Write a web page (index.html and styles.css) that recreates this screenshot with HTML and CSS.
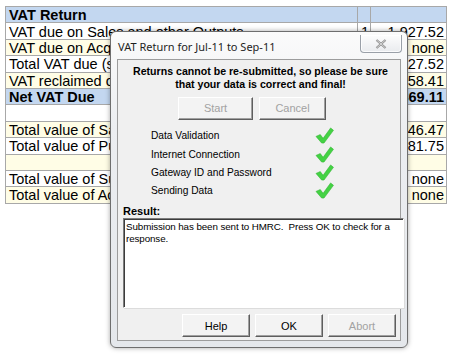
FILE: index.html
```html
<!DOCTYPE html>
<html>
<head>
<meta charset="utf-8">
<link rel="stylesheet" href="styles.css">
</head>
<body>
<div class="page">
  <table class="sheet">
    <colgroup><col class="c-label"><col class="c-box"><col class="c-val"></colgroup>
    <tr class="hdr"><td class="b">VAT Return</td><td></td><td></td></tr>
    <tr class="w"><td>VAT due on Sales and other Outputs</td><td class="n">1</td><td class="n">1,927.52</td></tr>
    <tr class="y"><td>VAT due on Acquisitions from other EC Member States</td><td class="n">2</td><td class="n">none</td></tr>
    <tr class="w"><td>Total VAT due (sum of boxes 1 and 2)</td><td class="n">3</td><td class="n">1,927.52</td></tr>
    <tr class="y"><td>VAT reclaimed on Purchases and other Inputs</td><td class="n">4</td><td class="n">58.41</td></tr>
    <tr class="hdr"><td class="b">Net VAT Due</td><td class="n b">5</td><td class="n b">1,869.11</td></tr>
    <tr class="w"><td></td><td></td><td></td></tr>
    <tr class="y"><td>Total value of Sales and all other Outputs</td><td class="n">6</td><td class="n">9,646.47</td></tr>
    <tr class="w"><td>Total value of Purchases and all other Inputs</td><td class="n">7</td><td class="n">1,281.75</td></tr>
    <tr class="y"><td></td><td></td><td></td></tr>
    <tr class="w"><td>Total value of Supplies of goods to other EC States</td><td class="n">8</td><td class="n">none</td></tr>
    <tr class="y"><td>Total value of Acquisitions of goods from EC States</td><td class="n">9</td><td class="n">none</td></tr>
  </table>

  <div class="dialog">
    <div class="titlebar">
      <span class="title">VAT Return for Jul-11 to Sep-11</span>
      <div class="close">
        <svg width="12" height="10" viewBox="0 0 12 10"><path d="M1.5 1 L10.5 9 M10.5 1 L1.5 9" stroke="#8a8a8a" stroke-width="2.2" fill="none"/><path d="M1.5 1 L10.5 9 M10.5 1 L1.5 9" stroke="#e6e6e6" stroke-width="0.8" fill="none"/></svg>
      </div>
    </div>
    <div class="client">
      <p class="warn">Returns cannot be re-submitted, so please be sure<br>that your data is correct and final!</p>
      <div class="toprow">
        <button class="btn dis start">Start</button>
        <button class="btn dis cancel">Cancel</button>
      </div>
      <ul class="checks">
        <li><span>Data Validation</span><svg class="tick" viewBox="0 0 20 18"><path d="M1 10 L5.5 8 L8.5 12 L16.5 1 L19.5 3.5 L9.5 17 L7 17 Z"/></svg></li>
        <li><span>Internet Connection</span><svg class="tick" viewBox="0 0 20 18"><path d="M1 10 L5.5 8 L8.5 12 L16.5 1 L19.5 3.5 L9.5 17 L7 17 Z"/></svg></li>
        <li><span>Gateway ID and Password</span><svg class="tick" viewBox="0 0 20 18"><path d="M1 10 L5.5 8 L8.5 12 L16.5 1 L19.5 3.5 L9.5 17 L7 17 Z"/></svg></li>
        <li><span>Sending Data</span><svg class="tick" viewBox="0 0 20 18"><path d="M1 10 L5.5 8 L8.5 12 L16.5 1 L19.5 3.5 L9.5 17 L7 17 Z"/></svg></li>
      </ul>
      <div class="result-label">Result:</div>
      <div class="result">Submission has been sent to HMRC.&nbsp; Press OK to check for a response.</div>
      <div class="botrow">
        <button class="btn">Help</button>
        <button class="btn">OK</button>
        <button class="btn dis">Abort</button>
      </div>
    </div>
  </div>
</div>
</body>
</html>
```

FILE: styles.css
```css
* { box-sizing: border-box; }
html, body { margin: 0; padding: 0; background: #fff; }
.page {
  position: relative;
  width: 450px;
  height: 354px;
  overflow: hidden;
  padding: 6px 0 0 5px;
}
.sheet {
  border-collapse: collapse;
  table-layout: fixed;
  width: 441px;
  font-family: "Liberation Sans", Arial, sans-serif;
  font-size: 14.5px;
  color: #000;
}
.c-label { width: 352px; }
.c-box { width: 13px; }
.c-val { width: 76px; }
.sheet td {
  border: 1px solid #a8a8a8;
  height: 16.4px;
  padding: 1px 2px 0 3px;
  line-height: 14px;
  white-space: nowrap;
  overflow: hidden;
}
.sheet td.n { text-align: right; }
.sheet td.b { font-weight: bold; }
.sheet tr.hdr td { background: #c3d7f0; }
.sheet tr.w td { background: #ffffff; }
.sheet tr.y td { background: #fffde6; }

/* dialog */
.dialog {
  position: absolute;
  left: 110px;
  top: 31px;
  width: 298px;
  height: 317px;
  border: 1px solid #6e6e6e;
  border-radius: 6px;
  background: linear-gradient(#fbfbfb, #eceef1 30%, #e4e7eb);
  box-shadow: 0 0 5px rgba(0,0,0,0.35);
  display: flex;
  flex-direction: column;
  padding: 0 6px 6px 6px;
  font-family: "Liberation Sans", Arial, sans-serif;
}
.titlebar {
  position: relative;
  height: 30px;
  display: flex;
  align-items: center;
  padding-left: 1px;
}
.title {
  font-family: "Noto Sans", "Open Sans", sans-serif;
  font-size: 11px;
  color: #1e1e1e;
  margin-top: 2px;
}
.close {
  position: absolute;
  right: -1px;
  top: 3px;
  width: 42px;
  height: 18px;
  border: 1px solid #9aa0a8;
  border-top: none;
  border-radius: 0 0 4px 4px;
  background: linear-gradient(#fdfdfd, #e9ebee);
  box-shadow: inset 0 0 0 1px rgba(255,255,255,0.8);
  display: flex;
  align-items: center;
  justify-content: center;
}
.client {
  flex: 1;
  background: #f0f0f0;
  border: 1px solid #9c9c9c;
  display: flex;
  flex-direction: column;
  padding: 0 0 3px 5px;
}
.warn {
  margin: 5px 0 0 0;
  text-align: center;
  font-weight: bold;
  font-size: 10.6px;
  line-height: 13px;
  color: #000;
  padding-right: 2px;
}
.toprow {
  display: flex;
  gap: 6px;
  margin: 6px 0 0 55px;
}
.btn {
  width: 68px;
  height: 23px;
  margin: 0;
  padding: 0;
  background: #f3f3f3;
  border: 1px solid;
  border-color: #ffffff #5e5e5e #5e5e5e #ffffff;
  box-shadow: inset -1px -1px 0 #a0a0a0;
  font-family: "Liberation Sans", Arial, sans-serif;
  font-size: 11px;
  color: #000;
}
.btn.dis { color: #a2a2a2; }
.toprow .start { width: 75px; }
.toprow .cancel { width: 67px; }
.checks {
  list-style: none;
  margin: 7px 0 0 28px;
  padding: 0;
  width: 183px;
}
.checks li {
  display: flex;
  align-items: center;
  justify-content: space-between;
  height: 18.3px;
  font-size: 10.2px;
  color: #000;
}
.tick {
  width: 19px;
  height: 17px;
  fill: #44d244;
  stroke: #2fb52f;
  stroke-width: 0.6;
}
.result-label {
  margin: 5px 0 0 0;
  font-weight: bold;
  font-size: 11px;
  line-height: 12px;
}
.result {
  margin: 1px -4px 0 0;
  height: 90px;
  background: #fff;
  border: 1px solid;
  border-color: #7c7c7c #ffffff #ffffff #7c7c7c;
  box-shadow: inset 1px 1px 0 #3c3c3c, 1px 1px 0 #dcdcdc;
  padding: 2px 1px 2px 2px;
  font-size: 9.8px;
  letter-spacing: -0.1px;
  line-height: 12px;
  color: #000;
}
.botrow {
  display: flex;
  gap: 5px;
  margin: 6px 0 0 59px;
}
```
